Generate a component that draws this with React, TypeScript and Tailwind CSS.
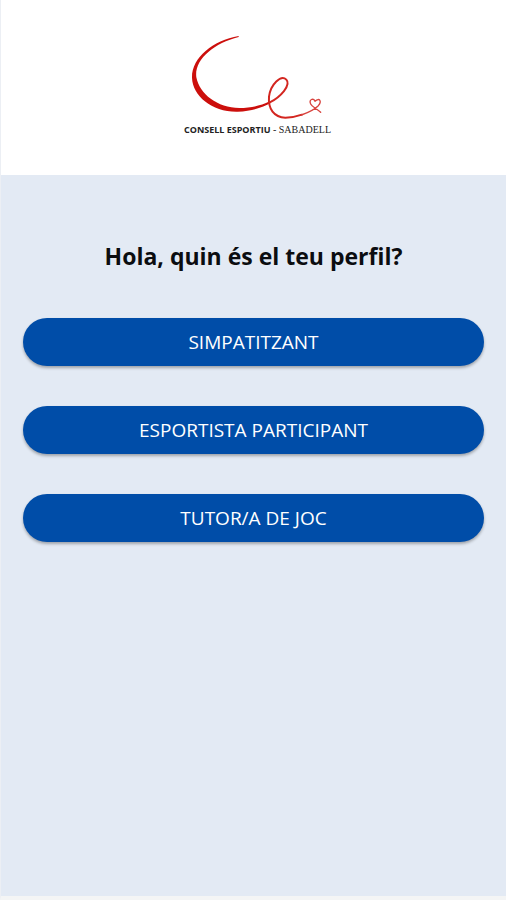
const profiles = ["SIMPATITZANT", "ESPORTISTA PARTICIPANT", "TUTOR/A DE JOC"]

function Logo() {
  return (
    <div className="flex flex-col items-center">
      <svg className="w-[164px] h-[99px]" viewBox="0 0 492 297" fill="none" aria-hidden="true">
        {/* Main stroke of the C, thicker at the bottom left */}
        <path
          d="M188 33 C110 47 47 98 48 158 C50 214 110 262 185 260 C230 258 262 246 284 234 L281 229 C255 242 225 249 190 249 C125 249 70 207 61 157 C54 105 112 55 188 36 Z"
          fill="#cc0f0c"
        />
        {/* Loop of the e */}
        <path
          d="M280 233 C314 216 346 180 331 164 C315 148 284 178 279 215 C276 252 294 277 328 278 C348 278 364 274 378 269"
          stroke="#d32620"
          strokeWidth="6"
          strokeLinecap="round"
        />
        {/* Tail and heart */}
        <path
          d="M376 270 C398 262 417 252 427 242 C438 229 431 216 417 229 C412 217 398 224 404 237 C408 246 422 250 434 262"
          stroke="#d8433e"
          strokeWidth="4"
          strokeLinecap="round"
          strokeLinejoin="round"
        />
      </svg>
      <p className="text-[9px] leading-3 text-[#222222] whitespace-nowrap">
        <span className="font-bold">CONSELL ESPORTIU</span>
        <span className="font-['Liberation_Serif',serif] text-[10px]"> - SABADELL</span>
      </p>
    </div>
  )
}

export default function App() {
  return (
    <div className="min-h-screen flex flex-col bg-[#e3eaf4] border-l border-b-4 border-l-[#eceff4] border-b-[#f4f5f5] font-['Open_Sans',sans-serif]">
      <header className="flex justify-center bg-white pl-2 pt-[25px] pb-[39px]">
        <Logo />
      </header>

      <main className="flex-1 px-[22px] pt-[65px]">
        <h1 className="text-center text-[23px] leading-8 font-bold text-[#0b0d10]">Hola, quin és el teu perfil?</h1>

        <div className="mt-[46px] flex flex-col gap-10">
          {profiles.map((profile) => (
            <button
              key={profile}
              type="button"
              className="w-full h-12 rounded-full bg-[#004da8] text-white text-[19px] leading-6 shadow-[0_2px_3px_rgba(0,0,0,0.3)]"
            >
              {profile}
            </button>
          ))}
        </div>
      </main>
    </div>
  )
}
